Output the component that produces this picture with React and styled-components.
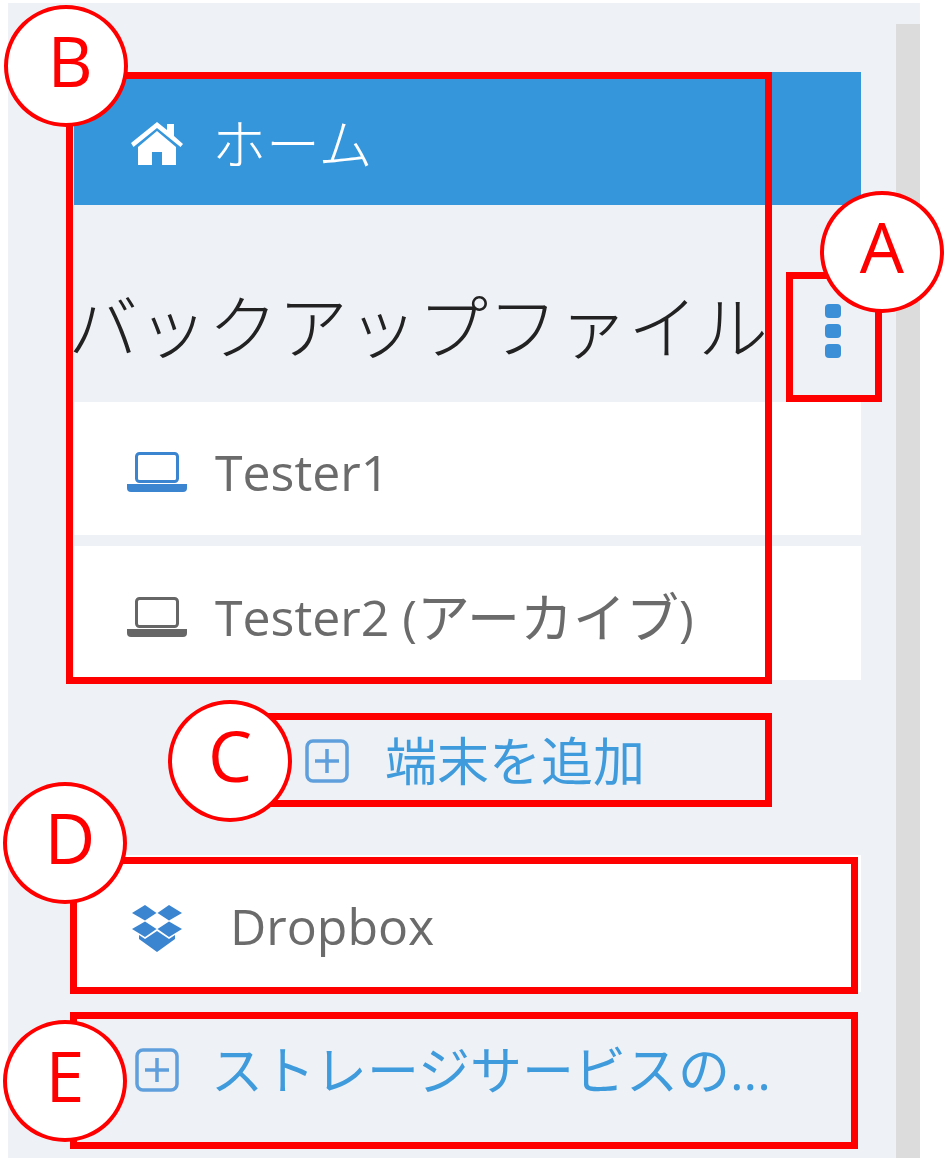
import React from 'react';
import styled, { createGlobalStyle } from 'styled-components';

const Global = createGlobalStyle`
  html, body { margin: 0; padding: 0; background: #fff; }
  body { font-family: "Open Sans", "Noto Sans CJK JP", sans-serif; }
`;

const Page = styled.div`
  position: relative;
  width: 947px;
  height: 1158px;
  overflow: hidden;
  padding: 3px 27px 0 8px;
  box-sizing: border-box;
`;

const Panel = styled.div`
  display: flex;
  height: 1155px;
  background: #eef1f6;
`;

const Sidebar = styled.nav`
  flex: 1;
  min-width: 0;
  padding: 69px 35px 0 66px;
  display: flex;
  flex-direction: column;
  filter: blur(0.6px);
`;

const Scrollbar = styled.div`
  width: 24px;
  margin-top: 21px;
  background: #dcdcdc;
`;

const Row = styled.a`
  display: flex;
  align-items: center;
  box-sizing: border-box;
  height: ${p => p.$height || 133}px;
  margin-top: ${p => p.$gap || 0}px;
  padding-left: ${p => p.$indent || 53}px;
  padding-top: ${p => p.$drop || 0}px;
  background: ${p => (p.$active ? '#3596db' : p.$plain ? 'transparent' : '#fff')};
  color: ${p => (p.$active ? '#fff' : p.$plain ? '#3f9bdc' : '#6b6b6b')};
  font-size: 50px;
  line-height: 1;
  white-space: nowrap;
`;

const Jp = styled.span`
  font-size: ${p => p.$size || 52}px;
  font-weight: ${p => p.$weight || 400};
`;

const IconSlot = styled.span`
  display: flex;
  align-items: center;
  flex: none;
  width: ${p => p.$width || 88}px;
  padding-top: ${p => p.$drop || 0}px;
  color: ${p => p.$color || 'inherit'};
`;

const Heading = styled.div`
  display: flex;
  align-items: center;
  height: 197px;
  padding-top: 54px;
  box-sizing: border-box;
`;

const HeadingText = styled.h2`
  margin: -8px 0 0 -6px;
  width: 757px;
  flex: none;
  font-size: 70px;
  font-weight: 300;
  line-height: 1;
  color: #222;
  white-space: nowrap;
`;

const Kebab = styled.svg`
  display: block;
  flex: none;
  width: 16px;
  height: 54px;
`;

const DeviceList = styled.div`
  display: flex;
  flex-direction: column;
  gap: 11px;
`;

const Mark = styled.div`
  position: absolute;
  left: ${p => p.$x}px;
  top: ${p => p.$y}px;
  width: ${p => p.$w}px;
  height: ${p => p.$h}px;
  box-sizing: border-box;
  border: 7px solid #ff0000;
`;

const Badge = styled.div`
  position: absolute;
  left: ${p => p.$x}px;
  top: ${p => p.$y}px;
  width: 124px;
  height: 122px;
  box-sizing: border-box;
  padding: 0 0 12px ${p => p.$nudge || 0}px;
  display: flex;
  align-items: center;
  justify-content: center;
  border: 4px solid #ff0000;
  border-radius: 50%;
  background: #fff;
  color: #ff0000;
  font-size: 70px;
  line-height: 1;
`;

const HomeIcon = () => (
  <svg width="52" height="43" viewBox="0 0 52 43" fill="currentColor" aria-hidden="true">
    <path d="M0 21 26 0l10 8V2h7v12l9 8-2.500 3L26 6 2.500 25z" />
    <path d="M7 25 26 9l19 16v18H31V30H21v13H7z" />
  </svg>
);

const LaptopIcon = () => (
  <svg width="60" height="40" viewBox="0 0 60 40" fill="none" aria-hidden="true">
    <rect x="9.500" y="1.500" width="41" height="28" rx="3" stroke="currentColor" strokeWidth="3" />
    <path d="M0 32h60v4a4 4 0 0 1-4 4H4a4 4 0 0 1-4-4z" fill="currentColor" />
  </svg>
);

const DropboxIcon = () => (
  <svg width="50" height="47" viewBox="0 0 50 47" fill="currentColor" aria-hidden="true">
    <path d="M13 0l11.500 8L13 15.500 0 8z" />
    <path d="M37 0l13 8-13 7.500L25.500 8z" />
    <path d="M13 16.500 24.500 24 13 32 0 24z" />
    <path d="M37 16.500 50 24l-13 8-11.500-8z" />
    <path d="M25 26l12 8 6-4v4L25 47 7 34v-4l6 4z" />
  </svg>
);

const PlusBoxIcon = () => (
  <svg width="44" height="44" viewBox="0 0 44 44" fill="none" stroke="currentColor" aria-hidden="true">
    <rect x="2" y="2" width="40" height="40" rx="6" strokeWidth="3.500" />
    <path d="M22 10v24M10 22h24" strokeWidth="3.500" />
  </svg>
);

export default function App() {
  return (
    <Page>
      <Global />
      <Panel>
        <Sidebar>
          <Row $active $drop={10} $indent={57}>
            <IconSlot $width={81}><HomeIcon /></IconSlot>
            <Jp $size={54} $weight={300}>ホーム</Jp>
          </Row>
          <Heading>
            <HeadingText>バックアップファイル</HeadingText>
            <Kebab viewBox="0 0 16 54" aria-hidden="true">
              <rect y="0" width="16" height="14" rx="4" fill="#3a8fd6" />
              <rect y="20" width="16" height="14" rx="4" fill="#3a8fd6" />
              <rect y="40" width="16" height="14" rx="4" fill="#3a8fd6" />
            </Kebab>
          </Heading>
          <DeviceList>
            <Row $drop={6}>
              <IconSlot $color="#3a84d0"><LaptopIcon /></IconSlot>
              Tester1
            </Row>
            <Row $height={134} $drop={8}>
              <IconSlot $color="#666"><LaptopIcon /></IconSlot>
              Tester2 (<Jp $size={53}>アーカイブ</Jp>)
            </Row>
          </DeviceList>
          <Row $plain $height={89} $gap={36} $indent={231}>
            <IconSlot $width={80} $color="#5f9fdc"><PlusBoxIcon /></IconSlot>
            <Jp $size={52}>端末を追加</Jp>
          </Row>
          <Row $height={137} $gap={50} $drop={4} $indent={58}>
            <IconSlot $width={98} $drop={5} $color="#3a84d0"><DropboxIcon /></IconSlot>
            Dropbox
          </Row>
          <Row $plain $height={134} $gap={11} $indent={61}>
            <IconSlot $width={76} $color="#5f9fdc"><PlusBoxIcon /></IconSlot>
            <Jp $size={52}>ストレージサービスの...</Jp>
          </Row>
        </Sidebar>
        <Scrollbar />
      </Panel>

      <Mark $x={66} $y={72} $w={706} $h={612} />
      <Mark $x={786} $y={272} $w={96} $h={130} />
      <Mark $x={240} $y={713} $w={532} $h={94} />
      <Mark $x={70} $y={857} $w={788} $h={137} />
      <Mark $x={70} $y={1012} $w={788} $h={137} />

      <Badge $x={4} $y={5} $nudge={8}>B</Badge>
      <Badge $x={820} $y={191}>A</Badge>
      <Badge $x={168} $y={700}>C</Badge>
      <Badge $x={3} $y={782} $nudge={10}>D</Badge>
      <Badge $x={3} $y={1020}>E</Badge>
    </Page>
  );
}
